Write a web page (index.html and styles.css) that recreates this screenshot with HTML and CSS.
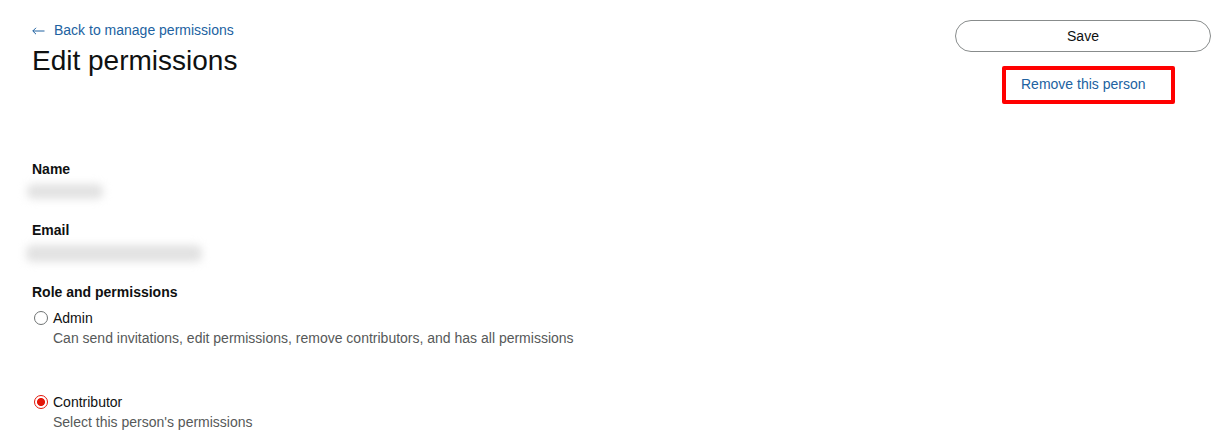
FILE: index.html
```html
<!DOCTYPE html>
<html lang="en">
<head>
<meta charset="utf-8">
<title>Edit permissions</title>
<link rel="stylesheet" href="styles.css">
</head>
<body>
<div class="page">
  <header class="top">
    <div class="title-col">
      <a class="back" href="#"><svg class="arrow" width="13" height="8" viewBox="0 0 13 8" aria-hidden="true"><path d="M0.8 4 H12.5 M0.8 4 L4 0.8 M0.8 4 L4 7.2" fill="none" stroke="#2162a1" stroke-width="1"/></svg>Back to manage permissions</a>
      <h1 class="title">Edit permissions</h1>
    </div>
    <div class="actions">
      <button class="save" type="button">Save</button>
      <div class="remove-box"><a class="remove" href="#">Remove this person</a></div>
    </div>
  </header>

  <section class="field field-name">
    <div class="label">Name</div>
    <div class="blur blur-name"></div>
  </section>

  <section class="field field-email">
    <div class="label">Email</div>
    <div class="blur blur-email"></div>
  </section>

  <section class="field field-role">
    <div class="label">Role and permissions</div>
    <label class="option">
      <span class="radio"></span>
      <span class="opt-text">
        <span class="opt-title">Admin</span>
        <span class="opt-desc">Can send invitations, edit permissions, remove contributors, and has all permissions</span>
      </span>
    </label>
    <label class="option option-contrib">
      <span class="radio radio-on"></span>
      <span class="opt-text">
        <span class="opt-title">Contributor</span>
        <span class="opt-desc">Select this person's permissions</span>
      </span>
    </label>
  </section>
</div>
</body>
</html>
```

FILE: styles.css
```css
* { box-sizing: border-box; }
html, body { margin: 0; padding: 0; background: #fff; }
body {
  font-family: "Liberation Sans", Arial, sans-serif;
  font-size: 14px;
  color: #0f1111;
  overflow: hidden;
}
.page {
  padding: 20px 21px 0 32px;
}
.top {
  display: flex;
  justify-content: space-between;
  align-items: flex-start;
}
.title-col {
  display: flex;
  flex-direction: column;
}
.back {
  color: #2162a1;
  text-decoration: none;
  font-size: 14px;
  line-height: 20px;
  height: 20px;
  display: flex;
  align-items: center;
}
.arrow {
  display: block;
  margin-right: 9px;
  margin-top: 1px;
}
.title {
  margin: 3px 0 0 0;
  font-size: 28px;
  line-height: 36px;
  font-weight: 400;
  color: #0f1111;
}
.actions {
  width: 256px;
  display: flex;
  flex-direction: column;
  align-items: flex-start;
}
.save {
  width: 256px;
  height: 32px;
  border: 1px solid #888c8c;
  border-radius: 16px;
  background: #fff;
  font-family: inherit;
  font-size: 14px;
  color: #0f1111;
  padding: 0;
}
.remove-box {
  margin: 14px 0 0 47px;
  width: 173px;
  height: 38px;
  border: 4px solid #ff0000;
  border-radius: 2px;
  padding-left: 15px;
  padding-bottom: 2px;
  display: flex;
  align-items: center;
}
.remove {
  color: #2162a1;
  text-decoration: none;
  font-size: 14px;
  line-height: 20px;
}
.field { display: flex; flex-direction: column; }
.label {
  font-weight: 700;
  font-size: 14px;
  line-height: 20px;
}
.field-name { margin-top: 55px; }
.field-email { margin-top: 21px; }
.field-role { margin-top: 20px; }
.blur {
  background: #e2e2e2;
  filter: blur(4px);
  border-radius: 6px;
}
.blur-name {
  width: 76px;
  height: 15px;
  margin: 5px 0 0 -5px;
}
.blur-email {
  width: 176px;
  height: 17px;
  margin: 5px 0 0 -6px;
}
.option {
  display: flex;
  align-items: flex-start;
  margin-top: 6px;
}
.option-contrib { margin-top: 44px; }
.radio {
  width: 14px;
  height: 14px;
  border: 1px solid #6f7373;
  border-radius: 50%;
  margin: 3px 5px 0 2px;
  flex: none;
  background: #fff;
}
.radio-on {
  border: 1px solid #e3170a;
  background: radial-gradient(circle, #e3170a 0 3.6px, #fff 4.4px 100%);
}
.opt-text {
  display: flex;
  flex-direction: column;
}
.opt-title {
  line-height: 20px;
  color: #0f1111;
}
.opt-desc {
  line-height: 20px;
  color: #565959;
}
```
